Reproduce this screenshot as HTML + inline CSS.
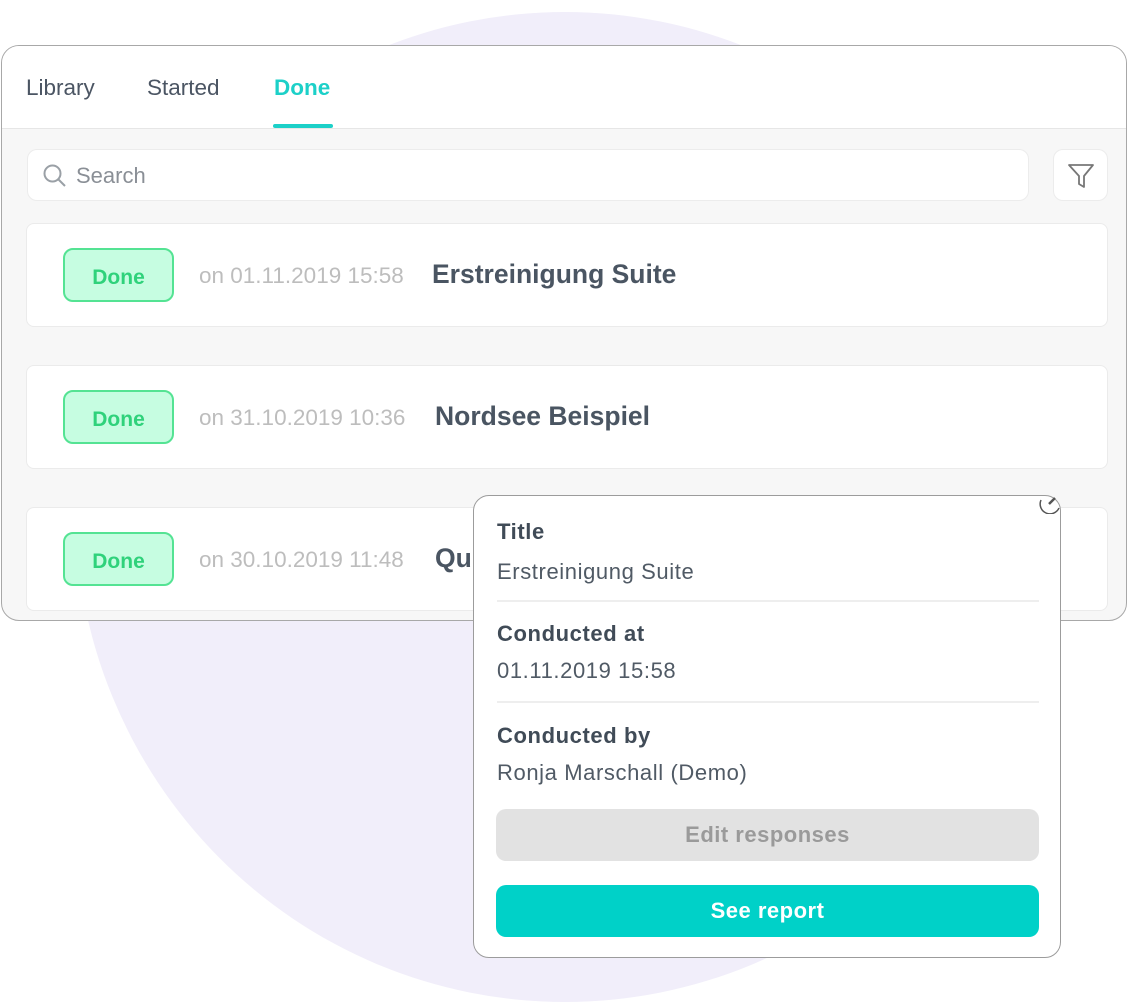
<!DOCTYPE html>
<html><head><meta charset="utf-8"><style>
*{box-sizing:border-box;margin:0;padding:0}
body{width:1128px;height:1000px;background:#fff;position:relative;overflow:hidden;font-family:"Liberation Sans",sans-serif}
.blob{position:absolute;left:75px;top:12px;width:980px;height:990px;border-radius:50%;background:#f1eefa}
.win{position:absolute;left:1px;top:45px;width:1126px;height:576px;border:1.5px solid #a8a8a8;border-radius:18px;background:#f7f7f7;overflow:hidden}
.head{height:83px;background:#fff;border-bottom:1px solid #e6e6e6;position:relative}
.tab{position:absolute;top:29px;font-size:22.5px;color:#4b5563}
.tab.on{color:#1cd0c8;font-weight:bold}
.ul{position:absolute;left:271px;top:78px;width:60px;height:4px;background:#1cd0c8;border-radius:2px}
.search{position:absolute;left:25px;top:103px;width:1002px;height:52px;background:#fff;border:1px solid #ececec;border-radius:10px}
.search span{position:absolute;left:48px;top:13px;font-size:22px;color:#8a8f96}
.filter{position:absolute;left:1051px;top:103px;width:55px;height:52px;background:#fff;border:1px solid #ececec;border-radius:10px}
.card{position:absolute;left:24px;width:1082px;height:104px;background:#fff;border:1.5px solid #ebebeb;border-radius:8px}
.badge{position:absolute;left:36px;top:24px;width:111px;height:54px;background:#c6fde1;border:2px solid #54e393;border-radius:10px;color:#2fd27b;font-weight:bold;font-size:21px;text-align:center;line-height:55px}
.date{position:absolute;left:172px;top:39px;font-size:22.5px;color:#bdbdbd}
.title{position:absolute;top:35px;font-size:26.5px;font-weight:bold;color:#4a5562}
.pop{position:absolute;left:473px;top:495px;width:588px;height:463px;background:#fff;border:1.5px solid #9c9c9c;border-radius:16px}
.lbl{position:absolute;left:23px;font-size:22px;letter-spacing:0.6px;font-weight:bold;color:#404b57}
.val{position:absolute;left:23px;font-size:22px;letter-spacing:0.6px;color:#505a65}
.hr{position:absolute;left:23px;width:542px;height:2px;background:#eeeeee}
.btn{position:absolute;left:22px;width:543px;height:52px;border-radius:10px;text-align:center;line-height:52px;font-size:22px;letter-spacing:0.5px;font-weight:bold}
</style></head><body>
<div class="blob"></div>
<div class="win">
 <div class="head">
  <div class="tab" style="left:24px">Library</div>
  <div class="tab" style="left:145px">Started</div>
  <div class="tab on" style="left:272px">Done</div>
  <div class="ul"></div>
 </div>
 <div class="search">
  <svg style="position:absolute;left:14px;top:13px" width="26" height="26" viewBox="0 0 26 26" fill="none" stroke="#9aa0a6" stroke-width="2"><circle cx="10.5" cy="10.5" r="8"/><path d="M16.5 16.5L23 23"/></svg>
  <span>Search</span>
 </div>
 <div class="filter"><svg style="position:absolute;left:13px;top:12px" width="28" height="28" viewBox="0 0 28 28" fill="none" stroke="#777" stroke-width="1.8" stroke-linejoin="round"><path d="M2 3H26L17 14V25L12 22V14Z"/></svg></div>
 <div class="card" style="top:177px"><div class="badge">Done</div><div class="date">on 01.11.2019 15:58</div><div class="title" style="left:405px">Erstreinigung Suite</div></div>
 <div class="card" style="top:319px"><div class="badge">Done</div><div class="date">on 31.10.2019 10:36</div><div class="title" style="left:408px">Nordsee Beispiel</div></div>
 <div class="card" style="top:461px"><div class="badge">Done</div><div class="date">on 30.10.2019 11:48</div><div class="title" style="left:408px">Qu</div></div>
</div>
<div class="pop">
 <svg style="position:absolute;left:565px;top:-2px" width="24" height="20" viewBox="0 0 24 20" fill="none" stroke="#555" stroke-width="1.5"><path d="M2 6A9 9 0 0 0 20 14"/><path d="M10 10L16 4" stroke-width="2.5"/></svg>
 <div class="lbl" style="top:23px">Title</div>
 <div class="val" style="top:63px">Erstreinigung Suite</div>
 <div class="hr" style="top:104px"></div>
 <div class="lbl" style="top:125px">Conducted at</div>
 <div class="val" style="top:162px">01.11.2019 15:58</div>
 <div class="hr" style="top:205px"></div>
 <div class="lbl" style="top:227px">Conducted by</div>
 <div class="val" style="top:264px">Ronja Marschall (Demo)</div>
 <div class="btn" style="top:313px;background:#e2e2e2;color:#9a9a9a">Edit responses</div>
 <div class="btn" style="top:389px;background:#00d1c8;color:#fff">See report</div>
</div>
</body></html>
